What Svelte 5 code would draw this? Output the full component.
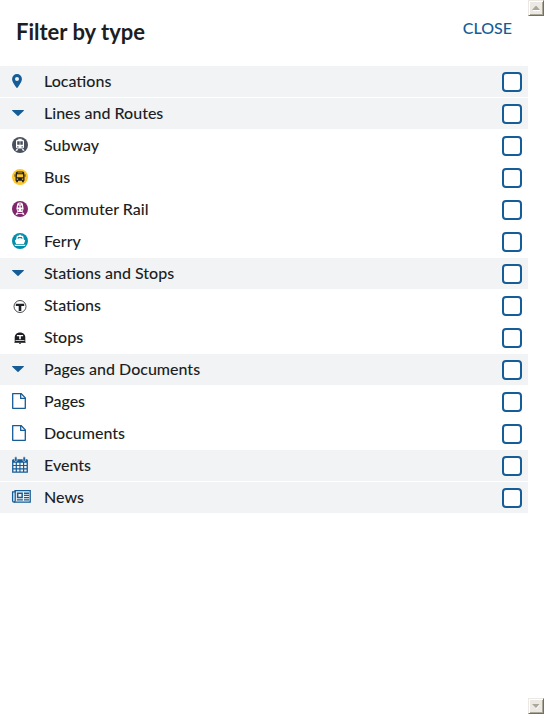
<script>
  const rows = [
    { label: 'Locations', icon: 'pin', head: true },
    { label: 'Lines and Routes', icon: 'caret', head: true },
    { label: 'Subway', icon: 'subway' },
    { label: 'Bus', icon: 'bus' },
    { label: 'Commuter Rail', icon: 'rail' },
    { label: 'Ferry', icon: 'ferry' },
    { label: 'Stations and Stops', icon: 'caret', head: true },
    { label: 'Stations', icon: 'station' },
    { label: 'Stops', icon: 'stop' },
    { label: 'Pages and Documents', icon: 'caret', head: true },
    { label: 'Pages', icon: 'page' },
    { label: 'Documents', icon: 'page' },
    { label: 'Events', icon: 'calendar', head: true },
    { label: 'News', icon: 'news', head: true }
  ];
</script>

{#snippet glyph(name)}
  <svg class="icon" width="20" height="18" viewBox="0 0 20 18" aria-hidden="true">
    {#if name === 'pin'}
      <path fill="#165c96" fill-rule="evenodd" d="M5 1A4.900 4.900 0 0 0 .1 5.900c0 2 .6 2.800 4.200 8.700.3.500 1.100.500 1.400 0 3.600-5.900 4.200-6.700 4.200-8.700A4.900 4.900 0 0 0 5 1zm0 3a2 2 0 1 1 0 4 2 2 0 0 1 0-4z" />
    {:else if name === 'caret'}
      <path fill="#165c96" d="M.5 5h11c.4 0 .6.500.3.800L6.500 10.800c-.3.300-.7.300-1 0L.2 5.800C-.1 5.500.1 5 .5 5z" />
    {:else if name === 'subway'}
      <circle cx="8" cy="8" r="8" fill="#494f5c" />
      <path fill="#fff" fill-rule="evenodd" d="M6.300 1.800h3.400v1h1.400l.9 1v6.700l-1 1H5l-1-1V3.800l.9-1h1.400zM5.200 4.200v3.600h5.600V4.200zm0 5v1.200h1.300V9.200zm4.300 0v1.200h1.300V9.200zM4.500 12.100h1.600l-.9 1.700H3.500zm5.400 0h1.600l1 1.700h-1.700z" />
      <path fill="#fff" d="M7.700 4h.6v4h-.6z" />
    {:else if name === 'bus'}
      <circle cx="8" cy="8" r="8" fill="#ffc72c" />
      <path fill="#1c1e23" fill-rule="evenodd" d="M4.900 2.600h6.200l1.100 1 .3 5v3.200h-.7v1.400h-1.700v-1.400H5.900v1.400H4.200v-1.400h-.7V8.600l.3-5zM5.600 3.400v.8h4.800v-.8zM5 5.200l-.2 3.100h6.400L11 5.200zM4.700 9.600v1.200h1.400V9.600zm5.200 0v1.200h1.400V9.600z" />
      <path fill="#1c1e23" d="M2.600 5.300h.8v2.500h-.8zM12.600 5.300h.8v2.500h-.8z" />
    {:else if name === 'rail'}
      <circle cx="8" cy="8" r="8" fill="#80276c" />
      <path fill="#fff" fill-rule="evenodd" d="M6.800 1.400h2.400l1.600 1.300.8 5-1 3.400H5.400l-1-3.400.8-5zM6.200 4.600l-.3 1.900h1.500V4.600zm2.400 0v1.900h1.500l-.3-1.900zM7.300 2.500v1.100h1.400V2.500zM5.600 8.200v1.200h1.200V8.200zm3.600 0v1.200h1.200V8.200z" />
      <path fill="#fff" d="M4.700 11.600h1.500l-1 2.400-1.700-.6zM9.800 11.600h1.500l1.200 1.800-1.700.6zM5.800 12.200h4.400v.9H5.800z" />
    {:else if name === 'ferry'}
      <circle cx="8" cy="8" r="8" fill="#008eaa" />
      <path fill="#fff" fill-rule="evenodd" d="M6.800 1.800h2.400v1h1.900l.8 3.800 1.300.8-1.300 3.600H4.100L2.800 7.400l1.300-.8.8-3.800h1.900zM6 4l-.5 2.100L8 5l2.500 1.100L10 4z" />
      <path fill="#fff" d="M2.400 11.700h11.200l-.8 1.300H3.200z" />
    {:else if name === 'station'}
      <circle cx="8" cy="9.500" r="6" fill="#fff" stroke="#1c1e23" stroke-width=".8" />
      <path fill="#1c1e23" d="M3.800 6.800h8.400V9H9.300v4.900H6.700V9H3.800z" />
    {:else if name === 'stop'}
      <path fill="#1c1e23" d="M8 3.500c3.300 0 5.300 2.100 5.300 5.200v4.600H2.700V8.700c0-3.100 2-5.200 5.300-5.200z" />
      <path fill="#fff" d="M4.900 5.900h6.200v1.400H8.800v2.900H7.200V7.300H4.900zM3.500 11.200h9v.9h-9z" />
      <path fill="#1c1e23" d="M2.400 13.200h11.200v.8H2.400zM7.300 13.900h1.400V15H7.300z" />
    {:else if name === 'page'}
      <path fill="#fff" stroke="#165c96" stroke-width="1.300" stroke-linejoin="round" d="M.7.700h8.600l4 4.200v10.400H.7z" />
      <path fill="none" stroke="#165c96" stroke-width="1.300" d="M8.700.8v4.500h4.600" />
    {:else if name === 'calendar'}
      <path fill="#165c96" d="M1 2.200h14.200l.7.700v12.800H.1V2.900z" />
      <path fill="#165c96" stroke="#f1f3f5" stroke-width=".6" d="M2.600.8c0-1.300 2.400-1.300 2.400 0v3.100c0 .7-2.400.7-2.400 0zM11 .8c0-1.300 2.400-1.300 2.400 0v3.100c0 .7-2.400.7-2.400 0z" />
      <path fill="#f1f3f5" d="M1.400 5.800h2.300v2.100H1.400zm3.500 0h2.500v2.100H4.900zm3.600 0H11v2.100H8.500zm3.700 0h2.400v2.100h-2.400zM1.400 9.100h2.300v2.200H1.400zm3.500 0h2.500v2.200H4.900zm3.600 0H11v2.200H8.500zm3.700 0h2.400v2.200h-2.400zM1.400 12.500h2.300v2H1.400zm3.500 0h2.500v2H4.900zm3.600 0H11v2H8.500zm3.700 0h2.400v2h-2.400z" />
    {:else if name === 'news'}
      <path fill="#f1f3f5" stroke="#165c96" stroke-width="1.300" d="M3 1.600h15.200v11.600H2c-.9 0-1.400-.6-1.400-1.400V2.900H3z" />
      <path fill="none" stroke="#165c96" stroke-width="1.300" d="M3.200 2v9.500c0 1-.4 1.500-1.200 1.600" />
      <path fill="#165c96" fill-rule="evenodd" d="M4.900 3.500h6v5.700h-6zM6.400 5v2.700h3V5zM12 3.600h5v1.300h-5zm0 2.200h5v1.300h-5zm0 2.200h5v1.300h-5zM4.900 10.300h6v1.300h-6zm7.100 0h5v1.300h-5z" />
    {/if}
  </svg>
{/snippet}

<div class="page">
  <main>
    <header>
      <h1>Filter by type</h1>
      <button class="close" type="button">CLOSE</button>
    </header>
    <ul>
      {#each rows as row, i}
        <li class:head={row.head}>
          <label for="facet-{i}">
            {@render glyph(row.icon)}
            <span>{row.label}</span>
          </label>
          <input id="facet-{i}" type="checkbox" />
        </li>
      {/each}
    </ul>
  </main>
  <div class="scrollbar">
    <button type="button" aria-label="Scroll up">
      <svg width="8" height="5" viewBox="0 0 8 5"><path fill="#fff" d="M1 4h7v1H1z" /><path fill="#aca899" d="M0 4 3.500 0h1L8 4z" /></svg>
    </button>
    <button type="button" aria-label="Scroll down">
      <svg width="8" height="5" viewBox="0 0 8 5"><path fill="#fff" d="M8 1 4.500 5h-1L7 1z" /><path fill="#aca899" d="M0 0h7.500L4 4z" /></svg>
    </button>
  </div>
</div>

<style>
  :global(body) {
    margin: 0;
    background: #fff;
  }
  .page {
    display: flex;
    min-height: 100vh;
    color: #1c1e23;
    font: 500 16px/24px Lato, "Liberation Sans", sans-serif;
  }
  main {
    flex: 1;
  }
  header {
    display: flex;
    justify-content: space-between;
    align-items: flex-start;
    padding: 16px 16px 18px;
  }
  h1 {
    margin: 0;
    font-size: 22px;
    line-height: 32px;
    font-weight: 700;
  }
  .close {
    padding: 0;
    border: 0;
    background: none;
    color: #165c96;
    font: inherit;
    cursor: pointer;
  }
  ul {
    margin: 0;
    padding: 0;
    list-style: none;
  }
  li {
    box-sizing: border-box;
    display: flex;
    align-items: center;
    height: 32px;
    padding: 0 6px 0 12px;
    border-bottom: 1px solid #fff;
  }
  .head {
    background: #f1f3f5;
    background-clip: padding-box;
  }
  label {
    flex: 1;
    display: flex;
    align-items: center;
    gap: 12px;
  }
  label span {
    padding-bottom: 2px;
  }
  .icon {
    flex: none;
    overflow: visible;
  }
  input {
    appearance: none;
    box-sizing: border-box;
    width: 20px;
    height: 20px;
    margin: 0;
    border: 2px solid #165c96;
    border-radius: 4px;
    background: #fff;
  }
  .scrollbar {
    display: flex;
    flex-direction: column;
    justify-content: space-between;
    width: 16px;
  }
  .scrollbar button {
    display: flex;
    align-items: center;
    justify-content: center;
    box-sizing: border-box;
    width: 16px;
    height: 16px;
    padding: 0;
    border: 1px solid;
    border-color: #ece9e4 #716f64 #716f64 #ece9e4;
    background: #ece9e4;
    box-shadow: inset 1px 1px #fff, inset -1px -1px #aca899;
  }
</style>
